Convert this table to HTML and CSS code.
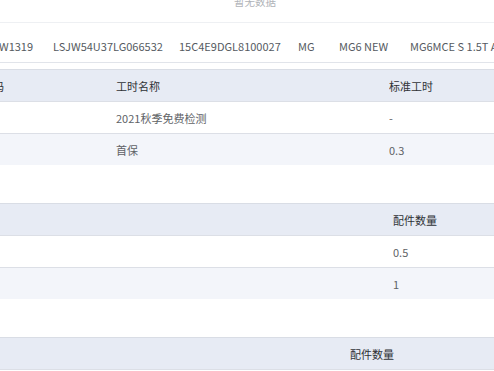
FILE: index.html
```html
<!DOCTYPE html>
<html lang="zh-CN">
<head>
<meta charset="utf-8">
<title>工单详情</title>
<link rel="stylesheet" href="styles.css">
</head>
<body>
<div class="page">
  <div class="empty"><span>暂无数据</span></div>

  <div class="vin-row">
    <div class="vin-cell">W1319</div>
    <div class="vin-cell">LSJW54U37LG066532</div>
    <div class="vin-cell">15C4E9DGL8100027</div>
    <div class="vin-cell">MG</div>
    <div class="vin-cell">MG6 NEW</div>
    <div class="vin-cell">MG6MCE S 1.5T AT</div>
  </div>

  <div class="table t-labor">
    <div class="row head">
      <div class="cell"><span class="cut">工时代码</span></div>
      <div class="cell">工时名称</div>
      <div class="cell">标准工时</div>
    </div>
    <div class="row">
      <div class="cell"></div>
      <div class="cell">2021秋季免费检测</div>
      <div class="cell">-</div>
    </div>
    <div class="row stripe">
      <div class="cell"></div>
      <div class="cell">首保</div>
      <div class="cell">0.3</div>
    </div>
  </div>

  <div class="table t-parts">
    <div class="row head">
      <div class="cell"></div>
      <div class="cell">配件数量</div>
    </div>
    <div class="row">
      <div class="cell"></div>
      <div class="cell">0.5</div>
    </div>
    <div class="row stripe">
      <div class="cell"></div>
      <div class="cell">1</div>
    </div>
  </div>

  <div class="table t-other">
    <div class="row head">
      <div class="cell"></div>
      <div class="cell">配件数量</div>
    </div>
  </div>
</div>
</body>
</html>
```

FILE: styles.css
```css
html, body {
  margin: 0;
  padding: 0;
  background: #ffffff;
}

body {
  font-family: "Noto Sans CJK SC", "Noto Sans", sans-serif;
  font-size: 11px;
  color: #606266;
  overflow: hidden;
}

.page {
  width: 494px;
  height: 371px;
  overflow: hidden;
}

.empty {
  height: 22px;
  display: flex;
  justify-content: center;
  padding-left: 16px;
  overflow: hidden;
}

.empty span {
  display: block;
  line-height: 11px;
  margin-top: -4px;
  color: #b0b3b8;
  font-size: 10.5px;
}

.vin-row {
  display: grid;
  grid-template-columns: 54px 126px 119px 41px 71px 1fr;
  border-top: 1px solid #eef0f3;
  border-bottom: 1px solid #e1e4ea;
  margin-left: -1px;
  padding-top: 15px;
  box-sizing: content-box;
  height: 24px;
  line-height: 16px;
  color: #555a61;
  white-space: nowrap;
  overflow: hidden;
}

.table {
  border-top: 1px solid #d9dde5;
}

.t-labor {
  margin-top: 6px;
}

.t-parts,
.t-other {
  margin-top: 38px;
}

.row {
  display: grid;
  height: 31px;
  align-items: center;
  line-height: 16px;
  border-bottom: 1px solid #dcdfe6;
  white-space: nowrap;
}

.row.stripe {
  background: #f3f5fa;
  border-bottom: none;
}

.row.head {
  background: #e7ebf4;
  color: #2f3236;
}

.t-labor .row {
  grid-template-columns: 116px 273px 1fr;
}

.t-parts .row {
  grid-template-columns: 393px 1fr;
}

.t-other .row {
  grid-template-columns: 350px 1fr;
}

.cell {
  overflow: hidden;
}

.cut {
  display: inline-block;
  margin-left: -40px;
}
```
